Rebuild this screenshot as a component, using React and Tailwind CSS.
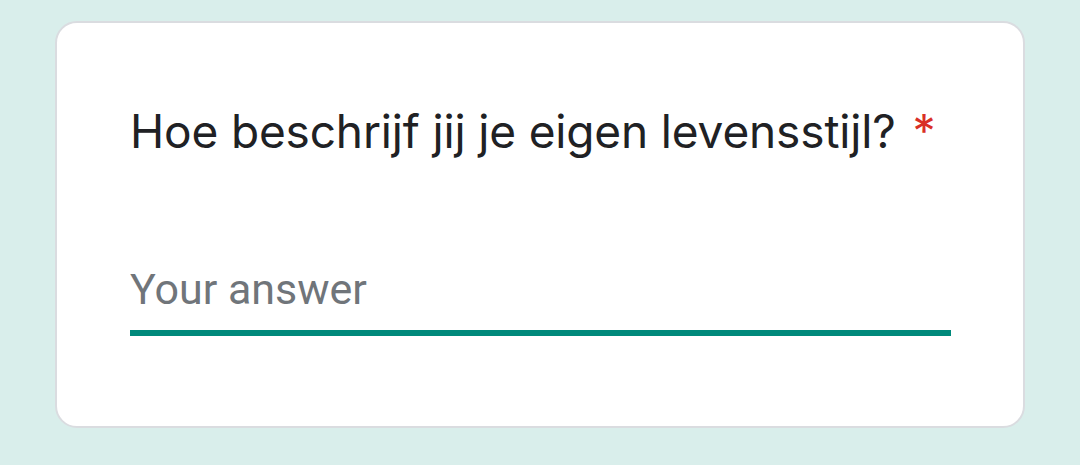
export default function App() {
  return (
    <div className="w-[1080px] h-[465px] bg-[#d9eeeb] pt-[21px] pl-[55px]">
      {/* Question card */}
      <div className="w-[970px] h-[407px] bg-white border-2 border-[#dadce0] rounded-[22px] pl-[73px] pr-[72px] pt-[80px]">
        <h2
          className="text-[46px] leading-[56px] text-[#202124] tracking-[-0.15px]"
          style={{ fontFamily: "Inter, 'Open Sans', sans-serif" }}
        >
          Hoe beschrijf jij je eigen levensstijl?{" "}
          <span className="text-[#d93025] ml-[4px]">*</span>
        </h2>

        <div className="mt-[106px]">
          <input
            type="text"
            placeholder="Your answer"
            className="w-full bg-transparent text-[43px] leading-[48px] text-[#202124] placeholder-[#70757a] outline-none pb-[17px]"
            style={{ fontFamily: "Roboto, sans-serif" }}
          />
          <div className="h-[6px] bg-[#00897b]" />
        </div>
      </div>
    </div>
  );
}
